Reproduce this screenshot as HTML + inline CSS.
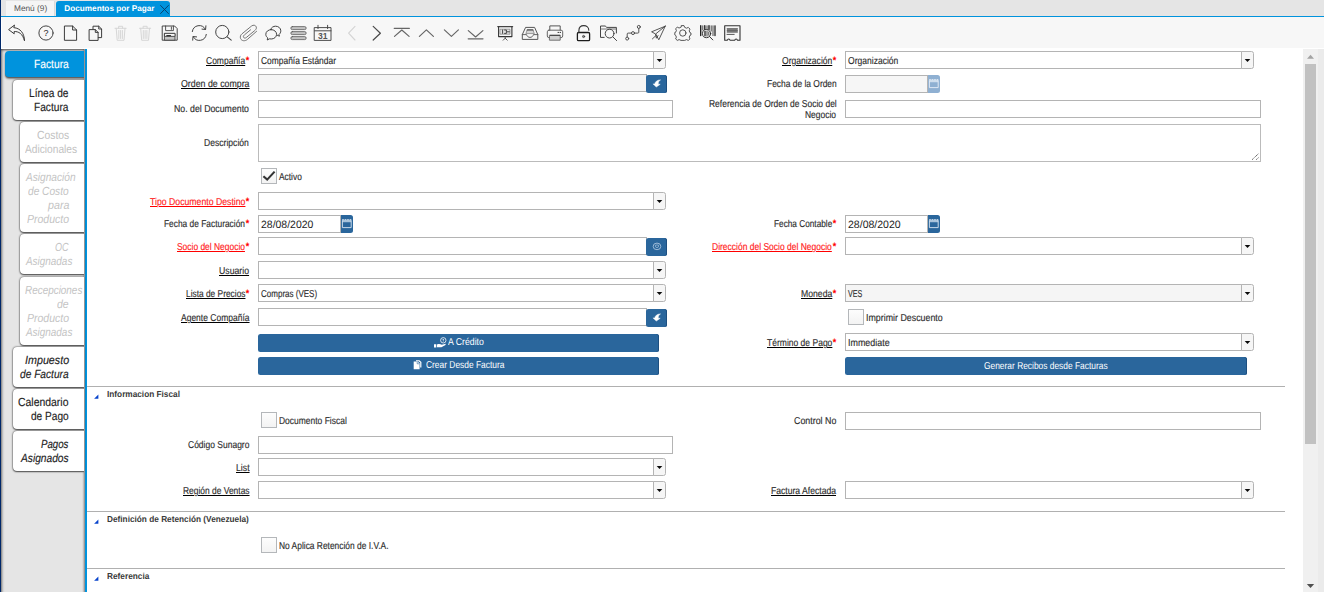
<!DOCTYPE html>
<html lang="es"><head><meta charset="utf-8"><title>Documentos por Pagar</title>
<style>
html,body{margin:0;padding:0;background:#fff;}
body{width:1324px;height:592px;overflow:hidden;position:relative;font-family:"Liberation Sans",sans-serif;}
#root{position:absolute;left:0;top:0;width:1324px;height:592px;overflow:hidden;background:#fff;}
#root div,#root svg.abs{position:absolute;}
.t{white-space:nowrap;text-rendering:geometricPrecision;}
.k{-webkit-text-stroke:0.15px currentColor;}
.navy{left:0;top:0;width:1px;height:592px;background:#00286a;}
.side{left:1px;top:49px;width:84px;height:556px;background:#e5e5e5;box-shadow:inset 0 1px 3px rgba(0,0,0,.55), inset 1px 0 3px rgba(0,0,0,.3), inset -1px 0 2px rgba(0,0,0,.3);}
.stab{border-radius:4px 0 0 4px;box-shadow:0 0 2px 0 rgba(0,0,0,.8),0 1px 1.5px rgba(0,0,0,.55);}
.ssel{box-shadow:0 1px 1px rgba(0,0,0,.35),0 2px 2px rgba(0,0,0,.4);}
</style></head><body><div id="root">
<div class="navy"></div>
<div style="left:1px;top:0px;width:1323px;height:16px;background:#e5e5e5;"></div>
<div style="left:1px;top:16px;width:1323px;height:1px;background:#0093dd;"></div>
<div style="left:2px;top:17px;width:1322px;height:31px;background:#f7f7f7;"></div>
<div style="left:6px;top:1px;width:49px;height:15px;background:#f5f5f5;border-right:1px solid #dadada;box-sizing:border-box;"></div>
<div style="left:56px;top:1px;width:114px;height:16px;background:#0093dd;border-radius:3px 3px 0 0;"></div>
<div class="t" style="top:3.00px;font-size:8.25px;line-height:11px;color:#555;left:13.65px;transform-origin:0 50%;transform:scaleX(1.0045);">Menú (9)</div>
<div class="t" style="top:3.00px;font-size:8.2px;line-height:11px;color:#fff;font-weight:bold;left:64.35px;transform-origin:0 50%;">Documentos por Pagar</div>
<svg class="abs" style="left:158px;top:3px" width="13" height="13" viewBox="158 3 13 13"><path d="M160.3 5.2 L168.7 13.8 M168.7 5.2 L160.3 13.8" stroke="#0b3a63" stroke-width="0.9" fill="none"/></svg>
<div class="side"></div>
<div style="left:85px;top:49px;width:2px;height:543px;background:#0093dd;"></div>
<div class="stab ssel" style="left:5px;top:51px;width:79px;height:26px;background:#0093dd;"></div>
<div class="t k" style="top:57.00px;font-size:11.8px;line-height:15px;color:#fff;left:34.35px;transform-origin:0 50%;transform:scaleX(0.8699);">Factura</div>
<div class="stab" style="left:13px;top:80px;width:71px;height:40px;background:#fff;"></div>
<div class="t k" style="top:86.00px;font-size:11.8px;line-height:15px;color:#222;left:29.35px;transform-origin:0 50%;transform:scaleX(0.8605);">Línea de</div>
<div class="t k" style="top:100.00px;font-size:11.8px;line-height:15px;color:#222;left:34.35px;transform-origin:0 50%;transform:scaleX(0.8624);">Factura</div>
<div class="stab" style="left:20px;top:122px;width:64px;height:40px;background:#fff;"></div>
<div class="t" style="top:128.00px;font-size:11.8px;line-height:15px;color:#c2c2c2;left:36.75px;transform-origin:0 50%;transform:scaleX(0.8761);">Costos</div>
<div class="t" style="top:142.00px;font-size:11.8px;line-height:15px;color:#c2c2c2;left:24.75px;transform-origin:0 50%;transform:scaleX(0.8640);">Adicionales</div>
<div class="stab" style="left:20px;top:164px;width:64px;height:68px;background:#fff;"></div>
<div class="t" style="top:170.00px;font-size:11.8px;line-height:15px;color:#c4c4c4;font-style:italic;left:25.56px;transform-origin:0 50%;transform:scaleX(0.8586);">Asignación</div>
<div class="t" style="top:184.00px;font-size:11.8px;line-height:15px;color:#c4c4c4;font-style:italic;left:28.25px;transform-origin:0 50%;transform:scaleX(0.8602);">de Costo</div>
<div class="t" style="top:198.00px;font-size:11.8px;line-height:15px;color:#c4c4c4;font-style:italic;left:47.52px;transform-origin:0 50%;transform:scaleX(0.9060);">para</div>
<div class="t" style="top:212.00px;font-size:11.8px;line-height:15px;color:#c4c4c4;font-style:italic;left:26.75px;transform-origin:0 50%;transform:scaleX(0.8919);">Producto</div>
<div class="stab" style="left:20px;top:234px;width:64px;height:40px;background:#fff;"></div>
<div class="t" style="top:240.00px;font-size:11.8px;line-height:15px;color:#c4c4c4;font-style:italic;left:55.25px;transform-origin:0 50%;transform:scaleX(0.7661);">OC</div>
<div class="t" style="top:254.00px;font-size:11.8px;line-height:15px;color:#c4c4c4;font-style:italic;left:25.55px;transform-origin:0 50%;transform:scaleX(0.8412);">Asignadas</div>
<div class="stab" style="left:20px;top:277px;width:64px;height:68px;background:#fff;"></div>
<div class="t" style="top:283.00px;font-size:11.8px;line-height:15px;color:#c4c4c4;font-style:italic;left:25.05px;transform-origin:0 50%;transform:scaleX(0.8409);">Recepciones</div>
<div class="t" style="top:297.00px;font-size:11.8px;line-height:15px;color:#c4c4c4;font-style:italic;left:57.25px;transform-origin:0 50%;transform:scaleX(0.8894);">de</div>
<div class="t" style="top:311.00px;font-size:11.8px;line-height:15px;color:#c4c4c4;font-style:italic;left:26.75px;transform-origin:0 50%;transform:scaleX(0.8919);">Producto</div>
<div class="t" style="top:325.00px;font-size:11.8px;line-height:15px;color:#c4c4c4;font-style:italic;left:25.55px;transform-origin:0 50%;transform:scaleX(0.8412);">Asignadas</div>
<div class="stab" style="left:13px;top:347px;width:71px;height:40px;background:#fff;"></div>
<div class="t k" style="top:353.00px;font-size:11.8px;line-height:15px;color:#222;font-style:italic;left:24.75px;transform-origin:0 50%;transform:scaleX(0.9092);">Impuesto</div>
<div class="t k" style="top:367.00px;font-size:11.8px;line-height:15px;color:#222;font-style:italic;left:20.25px;transform-origin:0 50%;transform:scaleX(0.8625);">de Factura</div>
<div class="stab" style="left:13px;top:389px;width:71px;height:40px;background:#fff;"></div>
<div class="t k" style="top:395.00px;font-size:11.8px;line-height:15px;color:#222;left:18.45px;transform-origin:0 50%;transform:scaleX(0.8843);">Calendario</div>
<div class="t k" style="top:409.00px;font-size:11.8px;line-height:15px;color:#222;left:31.25px;transform-origin:0 50%;transform:scaleX(0.8566);">de Pago</div>
<div class="stab" style="left:13px;top:431px;width:71px;height:40px;background:#fff;"></div>
<div class="t k" style="top:437.00px;font-size:11.8px;line-height:15px;color:#222;font-style:italic;left:41.45px;transform-origin:0 50%;transform:scaleX(0.8206);">Pagos</div>
<div class="t k" style="top:451.00px;font-size:11.8px;line-height:15px;color:#222;font-style:italic;left:21.26px;transform-origin:0 50%;transform:scaleX(0.8645);">Asignados</div>
<div style="left:84px;top:49px;width:1px;height:543px;background:#989595;"></div>
<div style="left:1303px;top:49px;width:15px;height:543px;background:#f0f0f0;"></div>
<div style="left:1318px;top:49px;width:6px;height:543px;background:#ebebeb;"></div>
<div style="left:1305px;top:64px;width:11px;height:380px;background:#c1c1c1;"></div>
<svg class="abs" style="left:1303px;top:49px" width="15" height="543" viewBox="1303 49 15 543"><path d="M1307 58.8 L1310.5 54.8 L1314 58.8 Z" fill="#a3a3a3"/><path d="M1306.8 584 L1314.2 584 L1310.5 588 Z" fill="#505050"/></svg>
<div class="t" style="right:1074.80px;top:55.00px;font-size:11px;line-height:13px;font-weight:bold;color:#f00;transform-origin:100% 50%;transform:scaleX(0.82)">*</div>
<div class="t k" style="top:55.00px;font-size:10px;line-height:13px;color:#2e2e2e;text-decoration:underline;text-decoration-color:#000;text-decoration-thickness:1px;text-underline-offset:1px;left:205.95px;transform-origin:0 50%;transform:scaleX(0.8496);">Compañía</div>
<div style="left:258px;top:51px;width:396px;height:18px;background:#fff;border:1px solid #b4b4b4;box-sizing:border-box;"></div>
<div style="left:653px;top:51px;width:13px;height:18px;background:#f6f6f6;border:1px solid #b4b4b4;box-sizing:border-box;border-radius:0 2.5px 2.5px 0;"></div>
<svg class="abs" style="left:653px;top:51px" width="13" height="18" viewBox="0 0 13 18"><path d="M3.7 7.9 L9.3 7.9 L6.5 11 Z" fill="#0a0a0a"/></svg>
<div class="t k" style="top:55.00px;font-size:10px;line-height:13px;color:#2e2e2e;left:261.10px;transform-origin:0 50%;transform:scaleX(0.8432);">Compañía Estándar</div>
<div class="t" style="right:487.90px;top:55.00px;font-size:11px;line-height:13px;font-weight:bold;color:#f00;transform-origin:100% 50%;transform:scaleX(0.82)">*</div>
<div class="t k" style="top:55.00px;font-size:10px;line-height:13px;color:#2e2e2e;text-decoration:underline;text-decoration-color:#000;text-decoration-thickness:1px;text-underline-offset:1px;left:781.85px;transform-origin:0 50%;transform:scaleX(0.8531);">Organización</div>
<div style="left:845px;top:51px;width:397px;height:18px;background:#fff;border:1px solid #b4b4b4;box-sizing:border-box;"></div>
<div style="left:1241px;top:51px;width:13px;height:18px;background:#f6f6f6;border:1px solid #b4b4b4;box-sizing:border-box;border-radius:0 2.5px 2.5px 0;"></div>
<svg class="abs" style="left:1241px;top:51px" width="13" height="18" viewBox="0 0 13 18"><path d="M3.7 7.9 L9.3 7.9 L6.5 11 Z" fill="#0a0a0a"/></svg>
<div class="t k" style="top:55.00px;font-size:10px;line-height:13px;color:#2e2e2e;left:848.00px;transform-origin:0 50%;transform:scaleX(0.8540);">Organización</div>
<div class="t k" style="top:78.00px;font-size:10px;line-height:13px;color:#2e2e2e;text-decoration:underline;text-decoration-color:#000;text-decoration-thickness:1px;text-underline-offset:1px;left:180.75px;transform-origin:0 50%;transform:scaleX(0.8805);">Orden de compra</div>
<div style="left:258px;top:74px;width:389px;height:18px;background:#f5f5f5;border:1px solid #b4b4b4;box-sizing:border-box;"></div>
<div style="left:646px;top:75px;width:21px;height:18px;background:#2a669c;border-radius:2.5px;box-shadow:inset -1px 0 0 #1d4f80;"></div>
<svg class="abs" style="left:646px;top:75px" width="21" height="18" viewBox="0 0 21 18"><path d="M14.5 4.9 C11 5 9 6.8 8.8 9 L7.1 8.9 L10.3 12.1 L14.2 9.3 L12.3 9.2 C12 7.4 12.8 5.9 14.5 4.9 Z" fill="#fff" stroke="#fff" stroke-width="0.5" stroke-linejoin="round"/></svg>
<div class="t k" style="top:78.00px;font-size:10px;line-height:13px;color:#2e2e2e;left:766.55px;transform-origin:0 50%;transform:scaleX(0.8419);">Fecha de la Orden</div>
<div style="left:845px;top:75px;width:83px;height:18px;background:#f6f6f6;border:1px solid #b4b4b4;box-sizing:border-box;"></div>
<div style="left:928px;top:75px;width:12px;height:18px;background:#8fb0d2;border-radius:0 2.5px 2.5px 0;"></div>
<svg class="abs" style="left:928px;top:75px" width="12" height="18" viewBox="0 0 12 18"><path d="M1.4 5.3 H10.2 V12.6 H1.4 Z M1.4 6.7 H10.2" fill="none" stroke="#e6eef7" stroke-width="0.9"/><path d="M1.2 4.7 H10.4" stroke="#e6eef7" stroke-width="1" stroke-dasharray="1.6 0.9"/></svg>
<div class="t k" style="top:103.00px;font-size:10px;line-height:13px;color:#2e2e2e;left:174.35px;transform-origin:0 50%;transform:scaleX(0.8756);">No. del Documento</div>
<div style="left:258px;top:100px;width:415px;height:18px;background:#fff;border:1px solid #b4b4b4;box-sizing:border-box;"></div>
<div class="t k" style="top:98.00px;font-size:10px;line-height:13px;color:#2e2e2e;left:708.55px;transform-origin:0 50%;transform:scaleX(0.8480);">Referencia de Orden de Socio del</div>
<div class="t k" style="top:109.00px;font-size:10px;line-height:13px;color:#2e2e2e;left:805.25px;transform-origin:0 50%;transform:scaleX(0.8460);">Negocio</div>
<div style="left:845px;top:100px;width:416px;height:18px;background:#fff;border:1px solid #b4b4b4;box-sizing:border-box;"></div>
<div class="t k" style="top:137.00px;font-size:10px;line-height:13px;color:#2e2e2e;left:204.45px;transform-origin:0 50%;transform:scaleX(0.8584);">Descripción</div>
<div style="left:258px;top:124px;width:1003px;height:38px;background:#fff;border:1px solid #bbb;box-sizing:border-box;"></div>
<svg class="abs" style="left:1251px;top:152px" width="9" height="9" viewBox="0 0 9 9"><path d="M1.2 7.6 L7.8 1.4 M5.3 7.6 L7.9 5.3" stroke="#4a4a4a" stroke-width="1" stroke-dasharray="1.1 0.7" fill="none"/></svg>
<div style="left:261px;top:168px;width:16px;height:16px;background:linear-gradient(#fdfdfd,#f3f3f3);border:1px solid #b4b7ba;box-sizing:border-box;"></div>
<svg class="abs" style="left:261px;top:168px" width="16" height="16" viewBox="0 0 16 16"><path d="M2.4 8.2 L6.2 11.6 L13.6 3.6" fill="none" stroke="#333" stroke-width="2.1"/></svg>
<div class="t k" style="top:171.00px;font-size:10px;line-height:13px;color:#2e2e2e;left:279.20px;transform-origin:0 50%;transform:scaleX(0.8367);">Activo</div>
<div class="t" style="right:1074.80px;top:196.00px;font-size:11px;line-height:13px;font-weight:bold;color:#f00;transform-origin:100% 50%;transform:scaleX(0.82)">*</div>
<div class="t k" style="top:196.00px;font-size:10px;line-height:13px;color:#f22;text-decoration:underline;text-decoration-color:#f00;text-decoration-thickness:1px;text-underline-offset:1px;left:149.75px;transform-origin:0 50%;transform:scaleX(0.8701);">Tipo Documento Destino</div>
<div style="left:258px;top:192px;width:396px;height:18px;background:#fff;border:1px solid #b4b4b4;box-sizing:border-box;"></div>
<div style="left:653px;top:192px;width:13px;height:18px;background:#f6f6f6;border:1px solid #b4b4b4;box-sizing:border-box;border-radius:0 2.5px 2.5px 0;"></div>
<svg class="abs" style="left:653px;top:192px" width="13" height="18" viewBox="0 0 13 18"><path d="M3.7 7.9 L9.3 7.9 L6.5 11 Z" fill="#0a0a0a"/></svg>
<div class="t" style="right:1074.80px;top:218.00px;font-size:11px;line-height:13px;font-weight:bold;color:#f00;transform-origin:100% 50%;transform:scaleX(0.82)">*</div>
<div class="t k" style="top:218.00px;font-size:10px;line-height:13px;color:#2e2e2e;left:164.25px;transform-origin:0 50%;transform:scaleX(0.8371);">Fecha de Facturación</div>
<div style="left:258px;top:215px;width:83px;height:18px;background:#fff;border:1px solid #b4b4b4;box-sizing:border-box;"></div>
<div style="left:341px;top:215px;width:12px;height:18px;background:#2a669c;border-radius:0 2.5px 2.5px 0;"></div>
<svg class="abs" style="left:341px;top:215px" width="12" height="18" viewBox="0 0 12 18"><path d="M1.4 5.3 H10.2 V12.6 H1.4 Z M1.4 6.7 H10.2" fill="none" stroke="#d6e4f2" stroke-width="0.9"/><path d="M1.2 4.7 H10.4" stroke="#d6e4f2" stroke-width="1" stroke-dasharray="1.6 0.9"/></svg>
<div class="t" style="top:218.00px;font-size:10.6px;line-height:14px;color:#222;left:260.90px;transform-origin:0 50%;transform:scaleX(0.9877);">28/08/2020</div>
<div class="t" style="right:488.20px;top:218.00px;font-size:11px;line-height:13px;font-weight:bold;color:#f00;transform-origin:100% 50%;transform:scaleX(0.82)">*</div>
<div class="t k" style="top:218.00px;font-size:10px;line-height:13px;color:#2e2e2e;left:773.55px;transform-origin:0 50%;transform:scaleX(0.8251);">Fecha Contable</div>
<div style="left:845px;top:215px;width:83px;height:18px;background:#fff;border:1px solid #b4b4b4;box-sizing:border-box;"></div>
<div style="left:928px;top:215px;width:12px;height:18px;background:#2a669c;border-radius:0 2.5px 2.5px 0;"></div>
<svg class="abs" style="left:928px;top:215px" width="12" height="18" viewBox="0 0 12 18"><path d="M1.4 5.3 H10.2 V12.6 H1.4 Z M1.4 6.7 H10.2" fill="none" stroke="#d6e4f2" stroke-width="0.9"/><path d="M1.2 4.7 H10.4" stroke="#d6e4f2" stroke-width="1" stroke-dasharray="1.6 0.9"/></svg>
<div class="t" style="top:218.00px;font-size:10.6px;line-height:14px;color:#222;left:847.80px;transform-origin:0 50%;transform:scaleX(0.9933);">28/08/2020</div>
<div class="t" style="right:1074.80px;top:241.00px;font-size:11px;line-height:13px;font-weight:bold;color:#f00;transform-origin:100% 50%;transform:scaleX(0.82)">*</div>
<div class="t k" style="top:241.00px;font-size:10px;line-height:13px;color:#f22;text-decoration:underline;text-decoration-color:#f00;text-decoration-thickness:1px;text-underline-offset:1px;left:177.25px;transform-origin:0 50%;transform:scaleX(0.8431);">Socio del Negocio</div>
<div style="left:258px;top:237px;width:389px;height:18px;background:#fff;border:1px solid #b4b4b4;box-sizing:border-box;"></div>
<div style="left:646px;top:238px;width:21px;height:18px;background:#2a669c;border-radius:2.5px;box-shadow:inset -1px 0 0 #1d4f80;"></div>
<svg class="abs" style="left:646px;top:238px" width="21" height="18" viewBox="0 0 21 18"><ellipse cx="11" cy="8.4" rx="3.8" ry="3.3" fill="none" stroke="#a9c3de" stroke-width="0.9"/><path d="M9.6 7 V9 Q11 10.4 12.4 9 V7 Z" fill="none" stroke="#a9c3de" stroke-width="0.7"/></svg>
<div class="t" style="right:487.90px;top:241.00px;font-size:11px;line-height:13px;font-weight:bold;color:#f00;transform-origin:100% 50%;transform:scaleX(0.82)">*</div>
<div class="t k" style="top:241.00px;font-size:10px;line-height:13px;color:#f22;text-decoration:underline;text-decoration-color:#f00;text-decoration-thickness:1px;text-underline-offset:1px;left:712.25px;transform-origin:0 50%;transform:scaleX(0.8488);">Dirección del Socio del Negocio</div>
<div style="left:845px;top:237px;width:397px;height:18px;background:#fff;border:1px solid #b4b4b4;box-sizing:border-box;"></div>
<div style="left:1241px;top:237px;width:13px;height:18px;background:#f6f6f6;border:1px solid #b4b4b4;box-sizing:border-box;border-radius:0 2.5px 2.5px 0;"></div>
<svg class="abs" style="left:1241px;top:237px" width="13" height="18" viewBox="0 0 13 18"><path d="M3.7 7.9 L9.3 7.9 L6.5 11 Z" fill="#0a0a0a"/></svg>
<div class="t k" style="top:265.00px;font-size:10px;line-height:13px;color:#2e2e2e;text-decoration:underline;text-decoration-color:#000;text-decoration-thickness:1px;text-underline-offset:1px;left:219.25px;transform-origin:0 50%;transform:scaleX(0.8723);">Usuario</div>
<div style="left:258px;top:261px;width:396px;height:18px;background:#fff;border:1px solid #b4b4b4;box-sizing:border-box;"></div>
<div style="left:653px;top:261px;width:13px;height:18px;background:#f6f6f6;border:1px solid #b4b4b4;box-sizing:border-box;border-radius:0 2.5px 2.5px 0;"></div>
<svg class="abs" style="left:653px;top:261px" width="13" height="18" viewBox="0 0 13 18"><path d="M3.7 7.9 L9.3 7.9 L6.5 11 Z" fill="#0a0a0a"/></svg>
<div class="t" style="right:1074.80px;top:288.00px;font-size:11px;line-height:13px;font-weight:bold;color:#f00;transform-origin:100% 50%;transform:scaleX(0.82)">*</div>
<div class="t k" style="top:288.00px;font-size:10px;line-height:13px;color:#2e2e2e;text-decoration:underline;text-decoration-color:#000;text-decoration-thickness:1px;text-underline-offset:1px;left:185.75px;transform-origin:0 50%;transform:scaleX(0.8356);">Lista de Precios</div>
<div style="left:258px;top:284px;width:396px;height:18px;background:#fff;border:1px solid #b4b4b4;box-sizing:border-box;"></div>
<div style="left:653px;top:284px;width:13px;height:18px;background:#f6f6f6;border:1px solid #b4b4b4;box-sizing:border-box;border-radius:0 2.5px 2.5px 0;"></div>
<svg class="abs" style="left:653px;top:284px" width="13" height="18" viewBox="0 0 13 18"><path d="M3.7 7.9 L9.3 7.9 L6.5 11 Z" fill="#0a0a0a"/></svg>
<div class="t k" style="top:288.00px;font-size:10px;line-height:13px;color:#2e2e2e;left:261.10px;transform-origin:0 50%;transform:scaleX(0.8014);">Compras (VES)</div>
<div class="t" style="right:487.90px;top:288.00px;font-size:11px;line-height:13px;font-weight:bold;color:#f00;transform-origin:100% 50%;transform:scaleX(0.82)">*</div>
<div class="t k" style="top:288.00px;font-size:10px;line-height:13px;color:#2e2e2e;text-decoration:underline;text-decoration-color:#000;text-decoration-thickness:1px;text-underline-offset:1px;left:800.75px;transform-origin:0 50%;transform:scaleX(0.8660);">Moneda</div>
<div style="left:845px;top:284px;width:397px;height:18px;background:#f5f5f5;border:1px solid #b4b4b4;box-sizing:border-box;"></div>
<div style="left:1241px;top:284px;width:13px;height:18px;background:#f6f6f6;border:1px solid #b4b4b4;box-sizing:border-box;border-radius:0 2.5px 2.5px 0;"></div>
<svg class="abs" style="left:1241px;top:284px" width="13" height="18" viewBox="0 0 13 18"><path d="M3.7 7.9 L9.3 7.9 L6.5 11 Z" fill="#0a0a0a"/></svg>
<div class="t k" style="top:288.00px;font-size:10px;line-height:13px;color:#2e2e2e;left:848.00px;transform-origin:0 50%;transform:scaleX(0.7100);">VES</div>
<div class="t k" style="top:312.00px;font-size:10px;line-height:13px;color:#2e2e2e;text-decoration:underline;text-decoration-color:#000;text-decoration-thickness:1px;text-underline-offset:1px;left:180.75px;transform-origin:0 50%;transform:scaleX(0.8500);">Agente Compañía</div>
<div style="left:258px;top:308px;width:389px;height:18px;background:#fff;border:1px solid #b4b4b4;box-sizing:border-box;"></div>
<div style="left:646px;top:309px;width:21px;height:18px;background:#2a669c;border-radius:2.5px;box-shadow:inset -1px 0 0 #1d4f80;"></div>
<svg class="abs" style="left:646px;top:309px" width="21" height="18" viewBox="0 0 21 18"><path d="M14.5 4.9 C11 5 9 6.8 8.8 9 L7.1 8.9 L10.3 12.1 L14.2 9.3 L12.3 9.2 C12 7.4 12.8 5.9 14.5 4.9 Z" fill="#fff" stroke="#fff" stroke-width="0.5" stroke-linejoin="round"/></svg>
<div style="left:848px;top:309px;width:16px;height:16px;background:linear-gradient(#fdfdfd,#f3f3f3);border:1px solid #b4b7ba;box-sizing:border-box;"></div>
<div class="t k" style="top:312.00px;font-size:10px;line-height:13px;color:#2e2e2e;left:866.30px;transform-origin:0 50%;transform:scaleX(0.8847);">Imprimir Descuento</div>
<div style="left:258px;top:334px;width:401px;height:18px;background:#2a669c;border-radius:2.5px;box-shadow:inset -1px 0 0 #1d4f80;"></div>
<div class="t" style="top:336.00px;font-size:10px;line-height:13px;color:#fff;left:447.75px;transform-origin:0 50%;transform:scaleX(0.8712);">A Crédito</div>
<svg class="abs" style="left:433px;top:336px" width="14" height="13" viewBox="433 336 14 13"><circle cx="443.3" cy="340.3" r="2.7" fill="none" stroke="#fff" stroke-width="0.8"/><path d="M443.3 339 V341.6 M442.6 339.4 H444" stroke="#fff" stroke-width="0.6" fill="none"/><path d="M434 344.3 H436.3 V347.4 H434 Z M437 344.6 C439 343.6 440.6 344.2 441.8 344.8 L445.6 343.8 C446 344.6 445.4 345.2 444.6 345.6 L441.4 347.2 H437 Z" fill="#fff"/></svg>
<div class="t" style="right:487.90px;top:337.00px;font-size:11px;line-height:13px;font-weight:bold;color:#f00;transform-origin:100% 50%;transform:scaleX(0.82)">*</div>
<div class="t k" style="top:337.00px;font-size:10px;line-height:13px;color:#2e2e2e;text-decoration:underline;text-decoration-color:#000;text-decoration-thickness:1px;text-underline-offset:1px;left:766.75px;transform-origin:0 50%;transform:scaleX(0.8520);">Término de Pago</div>
<div style="left:845px;top:333px;width:397px;height:18px;background:#fff;border:1px solid #b4b4b4;box-sizing:border-box;"></div>
<div style="left:1241px;top:333px;width:13px;height:18px;background:#f6f6f6;border:1px solid #b4b4b4;box-sizing:border-box;border-radius:0 2.5px 2.5px 0;"></div>
<svg class="abs" style="left:1241px;top:333px" width="13" height="18" viewBox="0 0 13 18"><path d="M3.7 7.9 L9.3 7.9 L6.5 11 Z" fill="#0a0a0a"/></svg>
<div class="t k" style="top:337.00px;font-size:10px;line-height:13px;color:#2e2e2e;left:848.00px;transform-origin:0 50%;transform:scaleX(0.8929);">Immediate</div>
<div style="left:258px;top:357px;width:401px;height:18px;background:#2a669c;border-radius:2.5px;box-shadow:inset -1px 0 0 #1d4f80;"></div>
<div class="t" style="top:359.00px;font-size:10px;line-height:13px;color:#fff;left:426.45px;transform-origin:0 50%;transform:scaleX(0.8399);">Crear Desde Factura</div>
<svg class="abs" style="left:413px;top:359px" width="10" height="11" viewBox="413 359 10 11"><path d="M416 360.2 H419.4 L421.4 362 V367.6 H420.2 V362.6 L418.6 361.2 H416 Z" fill="#fff"/><path d="M413.7 361.6 H417.6 L419.6 363.4 V369.3 H413.7 Z" fill="#fff"/><path d="M417.2 361.9 V363.8 H419.3" fill="none" stroke="#2a669c" stroke-width="0.6"/></svg>
<div style="left:845px;top:357px;width:402px;height:18px;background:#2a669c;border-radius:2.5px;box-shadow:inset -1px 0 0 #1d4f80;"></div>
<div class="t" style="top:360.00px;font-size:10px;line-height:13px;color:#fff;left:984.45px;transform-origin:0 50%;transform:scaleX(0.8394);">Generar Recibos desde Facturas</div>
<div style="left:87px;top:386px;width:1198px;height:1px;background:#b0b0b0;"></div>
<svg class="abs" style="left:94px;top:394px" width="5" height="5" viewBox="0 0 5 5"><path d="M0.1 4.7 L4.4 4.7 L4.4 0.4 Z" fill="#0844cc"/></svg>
<div class="t" style="top:389.00px;font-size:8.8px;line-height:11px;color:#3a3a3a;font-weight:bold;left:106.75px;transform-origin:0 50%;transform:scaleX(0.9383);">Informacion Fiscal</div>
<div style="left:261px;top:412px;width:16px;height:16px;background:linear-gradient(#fdfdfd,#f3f3f3);border:1px solid #b4b7ba;box-sizing:border-box;"></div>
<div class="t k" style="top:415.00px;font-size:10px;line-height:13px;color:#2e2e2e;left:279.30px;transform-origin:0 50%;transform:scaleX(0.8470);">Documento Fiscal</div>
<div class="t k" style="top:415.00px;font-size:10px;line-height:13px;color:#2e2e2e;left:794.05px;transform-origin:0 50%;transform:scaleX(0.8860);">Control No</div>
<div style="left:845px;top:412px;width:416px;height:18px;background:#fff;border:1px solid #b4b4b4;box-sizing:border-box;"></div>
<div class="t k" style="top:439.00px;font-size:10px;line-height:13px;color:#2e2e2e;left:188.05px;transform-origin:0 50%;transform:scaleX(0.8499);">Código Sunagro</div>
<div style="left:258px;top:436px;width:415px;height:18px;background:#fff;border:1px solid #b4b4b4;box-sizing:border-box;"></div>
<div class="t k" style="top:462.00px;font-size:10px;line-height:13px;color:#2e2e2e;text-decoration:underline;text-decoration-color:#000;text-decoration-thickness:1px;text-underline-offset:1px;left:235.75px;transform-origin:0 50%;transform:scaleX(0.8714);">List</div>
<div style="left:258px;top:458px;width:396px;height:18px;background:#fff;border:1px solid #b4b4b4;box-sizing:border-box;"></div>
<div style="left:653px;top:458px;width:13px;height:18px;background:#f6f6f6;border:1px solid #b4b4b4;box-sizing:border-box;border-radius:0 2.5px 2.5px 0;"></div>
<svg class="abs" style="left:653px;top:458px" width="13" height="18" viewBox="0 0 13 18"><path d="M3.7 7.9 L9.3 7.9 L6.5 11 Z" fill="#0a0a0a"/></svg>
<div class="t k" style="top:485.00px;font-size:10px;line-height:13px;color:#2e2e2e;text-decoration:underline;text-decoration-color:#000;text-decoration-thickness:1px;text-underline-offset:1px;left:182.75px;transform-origin:0 50%;transform:scaleX(0.8429);">Región de Ventas</div>
<div style="left:258px;top:481px;width:396px;height:18px;background:#fff;border:1px solid #b4b4b4;box-sizing:border-box;"></div>
<div style="left:653px;top:481px;width:13px;height:18px;background:#f6f6f6;border:1px solid #b4b4b4;box-sizing:border-box;border-radius:0 2.5px 2.5px 0;"></div>
<svg class="abs" style="left:653px;top:481px" width="13" height="18" viewBox="0 0 13 18"><path d="M3.7 7.9 L9.3 7.9 L6.5 11 Z" fill="#0a0a0a"/></svg>
<div class="t k" style="top:485.00px;font-size:10px;line-height:13px;color:#2e2e2e;text-decoration:underline;text-decoration-color:#000;text-decoration-thickness:1px;text-underline-offset:1px;left:771.25px;transform-origin:0 50%;transform:scaleX(0.8599);">Factura Afectada</div>
<div style="left:845px;top:481px;width:397px;height:18px;background:#fff;border:1px solid #b4b4b4;box-sizing:border-box;"></div>
<div style="left:1241px;top:481px;width:13px;height:18px;background:#f6f6f6;border:1px solid #b4b4b4;box-sizing:border-box;border-radius:0 2.5px 2.5px 0;"></div>
<svg class="abs" style="left:1241px;top:481px" width="13" height="18" viewBox="0 0 13 18"><path d="M3.7 7.9 L9.3 7.9 L6.5 11 Z" fill="#0a0a0a"/></svg>
<div style="left:87px;top:511px;width:1198px;height:1px;background:#b0b0b0;"></div>
<svg class="abs" style="left:94px;top:519px" width="5" height="5" viewBox="0 0 5 5"><path d="M0.1 4.7 L4.4 4.7 L4.4 0.4 Z" fill="#0844cc"/></svg>
<div class="t" style="top:514.00px;font-size:8.8px;line-height:11px;color:#3a3a3a;font-weight:bold;left:106.75px;transform-origin:0 50%;transform:scaleX(0.9388);">Definición de Retención (Venezuela)</div>
<div style="left:261px;top:537px;width:16px;height:16px;background:linear-gradient(#fdfdfd,#f3f3f3);border:1px solid #b4b7ba;box-sizing:border-box;"></div>
<div class="t k" style="top:540.00px;font-size:10px;line-height:13px;color:#2e2e2e;left:279.30px;transform-origin:0 50%;transform:scaleX(0.8407);">No Aplica Retención de I.V.A.</div>
<div style="left:87px;top:568px;width:1198px;height:1px;background:#b0b0b0;"></div>
<svg class="abs" style="left:94px;top:576px" width="5" height="5" viewBox="0 0 5 5"><path d="M0.1 4.7 L4.4 4.7 L4.4 0.4 Z" fill="#0844cc"/></svg>
<div class="t" style="top:571.00px;font-size:8.8px;line-height:11px;color:#3a3a3a;font-weight:bold;left:106.75px;transform-origin:0 50%;transform:scaleX(0.9412);">Referencia</div>
<svg class="abs" style="left:0;top:17px" width="760" height="31" viewBox="0 17 760 31" fill="none" stroke="#3a3a3a" stroke-width="1" stroke-linejoin="round" stroke-linecap="round">
<!-- undo -->
<path d="M14.2 25.3 L8.6 29.6 L14.2 33.8 L14.2 31.5 C18.6 31.4 22.6 33.6 24.5 40.8 C24.3 33.4 20.4 28.1 14.2 27.7 Z"/>
<!-- help -->
<circle cx="46" cy="33" r="7.1" stroke="#444"/>
<text x="46" y="36.4" font-family="Liberation Sans, sans-serif" font-size="9" text-anchor="middle" fill="#2a2a2a" stroke="none">?</text>
<!-- new -->
<path d="M64.8 26 H72.6 L76.6 30 V40.3 H64.8 Z M72.6 26 V30 H76.6" stroke="#3c3c3c" stroke-width="1"/>
<!-- copy -->
<path d="M93 29.3 V26.2 H98.7 L101.6 29 V37.6 H98.3" stroke="#3c3c3c" stroke-width="1"/>
<path d="M98.7 26.2 V29 H101.6" stroke="#3c3c3c" stroke-width="0.9"/>
<path d="M89.5 29.6 H95.3 L98.1 32.4 V40.4 H89.5 Z M95.3 29.6 V32.4 H98.1" stroke="#3c3c3c" stroke-width="1"/>
<!-- trash x2 -->
<g stroke="#d6d6d6" stroke-width="1">
<path d="M115 28.3 H126.2 M118.6 28.3 V26.3 H122.6 V28.3 M116.2 28.3 L117.2 40.3 H124 L125 28.3 M118.8 30.5 V38.5 M120.6 30.5 V38.5 M122.4 30.5 V38.5"/>
<path d="M139.5 28.3 H150.7 M143.1 28.3 V26.3 H147.1 V28.3 M140.7 28.3 L141.7 40.3 H148.5 L149.5 28.3 M143.3 30.5 V38.5 M145.1 30.5 V38.5 M146.9 30.5 V38.5"/>
</g>
<!-- save -->
<path d="M162.6 26 H174.6 L177.2 28.6 V40.2 H162.6 Z" stroke="#444" stroke-width="1"/>
<path d="M165.6 26 V30.6 H173.4 V26 M171.4 27 V29.4" stroke="#444" stroke-width="0.9"/>
<rect x="164.8" y="33.4" width="10.2" height="6.8" fill="#c4c4c4" stroke="#444" stroke-width="0.9"/>
<rect x="164.8" y="33.4" width="10.2" height="3" fill="#f7f7f7" stroke="#444" stroke-width="0.9"/>
<path d="M166.8 35.6 H170.5" stroke="#333" stroke-width="1.2"/>
<!-- refresh -->
<path d="M192.3 31.6 A7 7 0 0 1 205.4 29.3 M206.3 34.4 A7 7 0 0 1 193.2 36.7" stroke="#444"/>
<path d="M205.9 25.8 L205.6 29.5 L202 29.1 M192.7 40.2 L193 36.5 L196.6 36.9" stroke="#444"/>
<!-- search -->
<circle cx="222.3" cy="32" r="6.6" stroke="#444"/>
<path d="M227.2 36.9 L231.2 40.2" stroke="#444" stroke-width="1.1"/>
<!-- clip -->
<path d="M256.6 31.3 L247.4 39.4 C245 41.5 241.6 41 240.6 38.6 C239.8 36.6 240.6 35 242 33.8 L251.6 26 C253.4 24.6 255.6 25.2 256.2 26.8 C256.8 28.3 256 29.5 254.8 30.5 L246.2 37.6 C245.2 38.4 243.9 38.2 243.5 37.2 C243.1 36.3 243.6 35.6 244.4 34.9 L250.6 29.8" stroke="#666" stroke-width="0.9"/>
<!-- chat -->
<path d="M270.5 29.6 C271.3 27.4 273.4 26.2 275.6 26.2 C278.5 26.2 280.8 28.2 280.8 30.8 C280.8 32.3 280.1 33.6 279 34.5 L279.4 36.2 L277.4 35.3" stroke="#444"/>
<path d="M271.2 29.6 C268.2 29.6 265.8 31.7 265.8 34.3 C265.8 35.8 266.6 37.1 267.8 38 L267.2 40 L269.6 38.8 C270.1 38.9 270.6 39 271.2 39 C274.2 39 276.6 36.9 276.6 34.3 C276.6 31.7 274.2 29.6 271.2 29.6 Z" stroke="#444"/>
<!-- list -->
<g fill="#c2c2c2" stroke="#555" stroke-width="0.75">
<rect x="290.8" y="26.6" width="15.4" height="3" rx="1.5"/>
<rect x="290.8" y="31.6" width="15.4" height="3" rx="1.5"/>
<rect x="290.8" y="36.6" width="15.4" height="3" rx="1.5"/>
</g>
<!-- calendar -->
<path d="M314.6 27.6 H331 V40.4 H314.6 Z M314.6 30.8 H331 M318 25.3 V28.6 M327.6 25.3 V28.6" stroke="#444" stroke-width="0.95"/>
<text x="322.8" y="38.8" font-family="Liberation Sans, sans-serif" font-size="8.6" font-weight="bold" text-anchor="middle" fill="#555" stroke="none">31</text>
<!-- prev disabled / next -->
<path d="M355 26.4 L348.6 33.2 L355 40" stroke="#d4d4d4" stroke-width="1.1"/>
<path d="M373.2 26.4 L380.4 33.2 L373.2 40" stroke="#4a4a4a" stroke-width="1.2"/>
<!-- first, up, down, last -->
<g stroke="#666" stroke-width="1.2">
<path d="M394.2 28.3 H409.4 M394.5 36.4 L401.8 30 L409.1 36.4"/>
<path d="M419.4 36.4 L426.4 29.9 L433.4 36.4"/>
<path d="M444.4 29.9 L451.4 36.4 L458.4 29.9"/>
<path d="M468.3 30.6 L475.6 37 L482.9 30.6 M468.2 38.8 H483"/>
</g>
<!-- presentation -->
<path d="M497.8 26.6 H512.6" stroke="#444" stroke-width="1.3"/>
<path d="M498.6 27 V36.6 H511.9 V27" stroke="#333" stroke-width="1.1"/>
<rect x="500.4" y="29.2" width="9.6" height="5" fill="#e4e4e4" stroke="#777" stroke-width="0.7"/>
<path d="M502.6 30 V33.4 M504.6 30 H506.4 V33.4 H504.6 M507.4 31.8 H509.4" stroke="#333" stroke-width="0.9"/>
<path d="M505.2 36.6 V38.2 M503.2 40.2 L505.2 38.2 L507.2 40.2" stroke="#444" stroke-width="0.9"/>
<!-- inbox -->
<path d="M522.3 39 V34.6 L525.6 27.4 H534.6 L537.8 34.6 V39 Z" stroke="#555" stroke-width="1"/>
<path d="M522.3 34.6 H526.6 C527 36.4 528.4 37.4 530 37.4 C531.6 37.4 533 36.4 533.4 34.6 H537.8" stroke="#555" stroke-width="0.9"/>
<path d="M526 33.2 L527.4 29.6 H532.8 L534.2 33.2 Z" fill="#d6d6d6" stroke="#777" stroke-width="0.7"/>
<path d="M527.2 30 H533" stroke="#444" stroke-width="1.2"/>
<!-- print -->
<path d="M549.8 30.2 V25.9 H560.2 V30.2" stroke="#555" stroke-width="1"/>
<rect x="547.3" y="30.2" width="15.4" height="7.4" rx="1.6" stroke="#666" stroke-width="1"/>
<rect x="549.8" y="35.2" width="10.4" height="5" fill="#d0d0d0" stroke="#666" stroke-width="0.9"/>
<path d="M550.4 35.4 H559.8" stroke="#444" stroke-width="1"/>
<path d="M558 32.4 H558.6 M560 32.4 H560.6" stroke="#333" stroke-width="1"/>
<!-- lock -->
<rect x="577.4" y="32.5" width="12.2" height="8.1" rx="1.2" stroke="#1c1c1c" stroke-width="1.3"/>
<path d="M578.9 32.3 V30.6 C578.9 27.6 581 25.6 583.8 25.6 C586.6 25.6 588.8 27.6 588.8 30.2" stroke="#333" stroke-width="1.1"/>
<circle cx="583.6" cy="36.5" r="1.1" fill="#888" stroke="#333" stroke-width="0.7"/>
<!-- folder search -->
<path d="M604.2 37.4 H600.5 V26 H605.2 L606.8 27.4 H616.4 V33" stroke="#444" stroke-width="1"/>
<path d="M600.5 29 H616.4" stroke="#666" stroke-width="0.9"/>
<circle cx="609.6" cy="33.6" r="4.4" stroke="#444" stroke-width="1"/>
<path d="M612.9 36.9 L616.6 40.6" stroke="#444" stroke-width="1"/>
<!-- workflow -->
<g stroke="#444" stroke-width="0.9">
<circle cx="627.2" cy="38.6" r="1.5"/><circle cx="633" cy="33.1" r="1.5"/><circle cx="638.8" cy="26.9" r="1.5"/>
<path d="M627.2 37 V34 Q627.2 33.1 628.2 33.1 H631.4 M634.6 33.1 H637.8 Q638.8 33.1 638.8 32.2 V28.5"/>
</g>
<!-- send -->
<path d="M665.2 26.2 L651.6 31.8 L655.6 34 L658.8 39.8 L665.2 26.2 Z M665.2 26.2 L655.6 34 L656.4 38.2 L658 35.6 M652.4 38.9 L655.9 35.6" stroke="#444" stroke-width="0.9"/>
<!-- gear -->
<path d="M681.6 25.7 H684 L684.7 27.5 L686.5 28.3 L688.3 27.5 L690 29.2 L689.2 31 L690 32.8 L691 33.2 V35 L690 35.4 L689.2 37.2 L690 39 L688.3 40.5 L686.5 39.7 L684.7 40.5 H681 L679.1 39.7 L677.3 40.5 L675.6 39 L676.4 37.2 L675.6 35.4 L674.8 35 V32.6 L675.6 32.4 L676.4 30.6 L675.6 28.8 L677.3 27.3 L679.1 28.1 L680.9 27.3 Z" stroke="#444" stroke-width="0.9" transform="translate(0,-0.1)"/>
<circle cx="682.8" cy="33" r="3.2" stroke="#444" stroke-width="0.9"/>
<!-- barcode search -->
<g stroke="#222">
<path d="M700.7 25.8 V35.6" stroke-width="1.4"/><path d="M702.8 25.8 V30" stroke-width="0.8"/><path d="M704.8 25.8 V29.4" stroke-width="1.4"/><path d="M707 25.8 V29.2" stroke-width="0.8"/><path d="M709 25.8 V29.6" stroke-width="1.4"/><path d="M711.2 25.8 V31" stroke-width="0.8"/><path d="M713 25.8 V35.6" stroke-width="0.8"/><path d="M715 25.8 V35.6" stroke-width="1.3"/>
<circle cx="706.6" cy="33.6" r="4.1" stroke-width="0.9" fill="#f7f7f7"/>
<path d="M705 31.4 V35.8" stroke-width="1.3"/><path d="M707 31 V36.2" stroke-width="0.8"/><path d="M708.8 32 V35.2" stroke-width="0.8"/>
<path d="M709.6 36.6 L712.8 39.9" stroke-width="0.9"/>
</g>
<!-- receipt -->
<path d="M724.7 25.7 H740 V40.2 H737.4 C737.2 38.6 735 38.6 734.8 40.2 H730 C729.8 38.6 727.6 38.6 727.4 40.2 H724.7 Z" stroke="#333" stroke-width="1.1"/>
<rect x="727" y="28.2" width="10.6" height="4.4" fill="#8a8a8a" stroke="none"/>
<path d="M727 28.8 H737.6 M727 30.4 H737.6 M727 32 H737.6" stroke="#555" stroke-width="0.7"/>
<path d="M727 34.4 H734.2" stroke="#555" stroke-width="1"/>
</svg>

</div></body></html>
